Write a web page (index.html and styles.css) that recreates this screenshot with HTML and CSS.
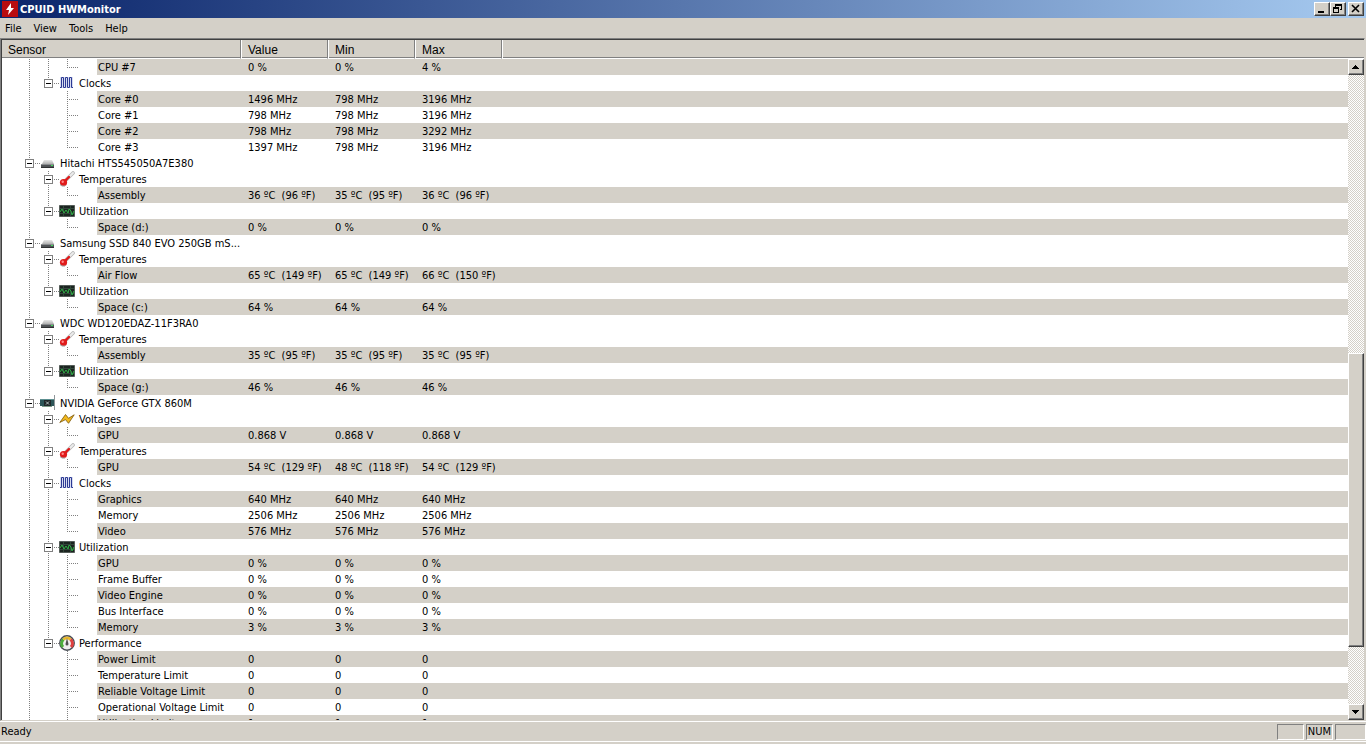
FILE: index.html
```html
<!DOCTYPE html>
<html lang="en">
<head>
    <meta charset="UTF-8">
    <title>CPUID HWMonitor</title>
    <link rel="stylesheet" href="styles.css">
</head>
<body>
    <svg class="defs" aria-hidden="true">
        <defs>
            <linearGradient id="metal" x1="0" y1="0" x2="0" y2="1">
                <stop offset="0" stop-color="#e8e8e8"/>
                <stop offset="1" stop-color="#b0b0b0"/>
            </linearGradient>
        </defs>
        <symbol id="clock" viewBox="0 0 16 16">
            <path fill="#d8dcf0" d="M1 2h13v11H1z"/>
            <path fill="none" stroke="#2c3a94" d="M1 12.500h1.500v-10h2v10h2v-10h2v10h2v-10h2v10H14"/>
        </symbol>
        <symbol id="disk" viewBox="0 0 16 16">
            <path fill="url(#metal)" d="M4 5h8l2 4H2z"/>
            <path fill="#505356" d="M1 9h13v3H1z"/>
            <path fill="#8a8d90" d="M1 9h13v1H1z"/>
            <path fill="#2e3032" d="M1 12h13v1H1z"/>
            <path fill="#3ee05a" d="M11 10h2v1h-2z"/>
        </symbol>
        <symbol id="temp" viewBox="0 0 16 16">
            <path stroke="#b4b4b4" stroke-width="3.600" stroke-linecap="round" d="M7 9l7-7"/>
            <path stroke="#ececec" stroke-width="2" stroke-linecap="round" d="M8 8l6-6"/>
            <path stroke="#e01818" stroke-width="2.400" stroke-linecap="round" d="M5 11l5-5"/>
            <circle cx="4.500" cy="11.500" r="3.600" fill="#e01c1c"/>
            <circle cx="3.700" cy="10.800" r="1.200" fill="#ff8a8a"/>
            <path fill="none" stroke="#9a9a9a" d="M1 13.500l2 1.500h3"/>
        </symbol>
        <symbol id="util" viewBox="0 0 16 16">
            <path fill="#1b2420" stroke="#555d59" d="M.5 2.500h15v11H.5z"/>
            <path stroke="#31463a" d="M1 5.500h14M1 10.500h14M4.500 3v10M11.500 3v10"/>
            <path fill="none" stroke="#2fae45" d="M1 9l2-3 2 4 2-3 2 3 1-4 2 2 1 4 2-4"/>
        </symbol>
        <symbol id="card" viewBox="0 0 16 16">
            <path fill="#2c5558" d="M0 4h14v7H0z"/>
            <path fill="#5c8f90" d="M0 4h14v1H0z"/>
            <path fill="#20282a" d="M4 5h7v6H4z"/>
            <path stroke="#b8c4c4" d="M6 6.500l3 3M9 6.500l-3 3"/>
            <path fill="#7d9a88" d="M2 11h10v1H2z"/>
            <path stroke="#8f9699" d="M14.500 0v15"/>
        </symbol>
        <symbol id="volt" viewBox="0 0 16 16">
            <path fill="#f2b91e" stroke="#7a5608" stroke-width=".8" d="M.8 11.500L6.500 3.500l3 3.800 5.700-3.500-5.700 8.500-3-3.700z"/>
        </symbol>
        <symbol id="gauge" viewBox="0 0 16 16">
            <circle cx="8" cy="8" r="7.200" fill="#eee" stroke="#474c54" stroke-width="1.500"/>
            <path fill="none" stroke="#4cae3c" stroke-width="3" d="M4 12A5 5 0 0 1 4.500 4.500"/>
            <path fill="none" stroke="#e8b830" stroke-width="3" d="M4.500 4.500A5 5 0 0 1 11.500 4.500"/>
            <path fill="none" stroke="#e04040" stroke-width="3" d="M11.500 4.500A5 5 0 0 1 12 12"/>
            <path fill="#505050" d="M8 3l1.500 6a1.500 1.500 0 0 1-3 0z"/>
        </symbol>
    </svg>

    <header class="titlebar">
        <svg class="logo" viewBox="0 0 16 16" aria-hidden="true">
            <path fill="#b80c10" d="M0 0h16v16H0z"/>
            <path fill="#fff" d="M9 2L4 9h3l-1 5 6-7H9z"/>
        </svg>
        <h1>CPUID HWMonitor</h1>
        <div class="window-buttons">
            <button type="button" aria-label="Minimize"><svg viewBox="0 0 12 10"><path fill="#000" d="M2 7h6v2H2z"/></svg></button>
            <button type="button" aria-label="Restore"><svg viewBox="0 0 12 10"><path fill="#000" d="M3 0h7v6H8V5h1V2H4v1H3zM1 3h6v6H1zM2 5v3h4V5z" fill-rule="evenodd"/></svg></button>
            <button type="button" class="close" aria-label="Close"><svg viewBox="0 0 12 10"><path stroke="#000" stroke-width="1.600" d="M2 1l7 7M9 1L2 8"/></svg></button>
        </div>
    </header>

    <nav class="menu">
        <button type="button">File</button>
        <button type="button">View</button>
        <button type="button">Tools</button>
        <button type="button">Help</button>
    </nav>

    <main class="list">
        <div class="view">
            <table>
                <colgroup>
                    <col class="col-sensor">
                    <col class="col-value">
                    <col class="col-value">
                    <col class="col-value">
                    <col>
                </colgroup>
                <thead>
                    <tr><th>Sensor</th><th>Value</th><th>Min</th><th>Max</th><td></td></tr>
                </thead>
                <tbody class="scrolled">
                    <tr class="leaf last"><td><span>CPU #7</span></td><td>0 %</td><td>0 %</td><td>4 %</td><td></td></tr>
                </tbody>
                <tbody class="last-group">
                    <tr class="group"><td><div><button type="button" aria-label="Collapse"></button><svg><use href="#clock"/></svg><span>Clocks</span></div></td><td></td><td></td><td></td><td></td></tr>
                    <tr class="leaf"><td><span>Core #0</span></td><td>1496 MHz</td><td>798 MHz</td><td>3196 MHz</td><td></td></tr>
                    <tr class="leaf"><td><span>Core #1</span></td><td>798 MHz</td><td>798 MHz</td><td>3196 MHz</td><td></td></tr>
                    <tr class="leaf"><td><span>Core #2</span></td><td>798 MHz</td><td>798 MHz</td><td>3292 MHz</td><td></td></tr>
                    <tr class="leaf last"><td><span>Core #3</span></td><td>1397 MHz</td><td>798 MHz</td><td>3196 MHz</td><td></td></tr>
                </tbody>

                <tbody>
                    <tr class="device"><td><div><button type="button" aria-label="Collapse"></button><svg><use href="#disk"/></svg><span>Hitachi HTS545050A7E380</span></div></td><td></td><td></td><td></td><td></td></tr>
                </tbody>
                <tbody>
                    <tr class="group"><td><div><button type="button" aria-label="Collapse"></button><svg><use href="#temp"/></svg><span>Temperatures</span></div></td><td></td><td></td><td></td><td></td></tr>
                    <tr class="leaf last"><td><span>Assembly</span></td><td>36 ºC&nbsp; (96 ºF)</td><td>35 ºC&nbsp; (95 ºF)</td><td>36 ºC&nbsp; (96 ºF)</td><td></td></tr>
                </tbody>
                <tbody class="last-group">
                    <tr class="group"><td><div><button type="button" aria-label="Collapse"></button><svg><use href="#util"/></svg><span>Utilization</span></div></td><td></td><td></td><td></td><td></td></tr>
                    <tr class="leaf last"><td><span>Space (d:)</span></td><td>0 %</td><td>0 %</td><td>0 %</td><td></td></tr>
                </tbody>

                <tbody>
                    <tr class="device"><td><div><button type="button" aria-label="Collapse"></button><svg><use href="#disk"/></svg><span>Samsung SSD 840 EVO 250GB mS...</span></div></td><td></td><td></td><td></td><td></td></tr>
                </tbody>
                <tbody>
                    <tr class="group"><td><div><button type="button" aria-label="Collapse"></button><svg><use href="#temp"/></svg><span>Temperatures</span></div></td><td></td><td></td><td></td><td></td></tr>
                    <tr class="leaf last"><td><span>Air Flow</span></td><td>65 ºC&nbsp; (149 ºF)</td><td>65 ºC&nbsp; (149 ºF)</td><td>66 ºC&nbsp; (150 ºF)</td><td></td></tr>
                </tbody>
                <tbody class="last-group">
                    <tr class="group"><td><div><button type="button" aria-label="Collapse"></button><svg><use href="#util"/></svg><span>Utilization</span></div></td><td></td><td></td><td></td><td></td></tr>
                    <tr class="leaf last"><td><span>Space (c:)</span></td><td>64 %</td><td>64 %</td><td>64 %</td><td></td></tr>
                </tbody>

                <tbody>
                    <tr class="device"><td><div><button type="button" aria-label="Collapse"></button><svg><use href="#disk"/></svg><span>WDC WD120EDAZ-11F3RA0</span></div></td><td></td><td></td><td></td><td></td></tr>
                </tbody>
                <tbody>
                    <tr class="group"><td><div><button type="button" aria-label="Collapse"></button><svg><use href="#temp"/></svg><span>Temperatures</span></div></td><td></td><td></td><td></td><td></td></tr>
                    <tr class="leaf last"><td><span>Assembly</span></td><td>35 ºC&nbsp; (95 ºF)</td><td>35 ºC&nbsp; (95 ºF)</td><td>35 ºC&nbsp; (95 ºF)</td><td></td></tr>
                </tbody>
                <tbody class="last-group">
                    <tr class="group"><td><div><button type="button" aria-label="Collapse"></button><svg><use href="#util"/></svg><span>Utilization</span></div></td><td></td><td></td><td></td><td></td></tr>
                    <tr class="leaf last"><td><span>Space (g:)</span></td><td>46 %</td><td>46 %</td><td>46 %</td><td></td></tr>
                </tbody>

                <tbody>
                    <tr class="device"><td><div><button type="button" aria-label="Collapse"></button><svg><use href="#card"/></svg><span>NVIDIA GeForce GTX 860M</span></div></td><td></td><td></td><td></td><td></td></tr>
                </tbody>
                <tbody>
                    <tr class="group"><td><div><button type="button" aria-label="Collapse"></button><svg><use href="#volt"/></svg><span>Voltages</span></div></td><td></td><td></td><td></td><td></td></tr>
                    <tr class="leaf last"><td><span>GPU</span></td><td>0.868 V</td><td>0.868 V</td><td>0.868 V</td><td></td></tr>
                </tbody>
                <tbody>
                    <tr class="group"><td><div><button type="button" aria-label="Collapse"></button><svg><use href="#temp"/></svg><span>Temperatures</span></div></td><td></td><td></td><td></td><td></td></tr>
                    <tr class="leaf last"><td><span>GPU</span></td><td>54 ºC&nbsp; (129 ºF)</td><td>48 ºC&nbsp; (118 ºF)</td><td>54 ºC&nbsp; (129 ºF)</td><td></td></tr>
                </tbody>
                <tbody>
                    <tr class="group"><td><div><button type="button" aria-label="Collapse"></button><svg><use href="#clock"/></svg><span>Clocks</span></div></td><td></td><td></td><td></td><td></td></tr>
                    <tr class="leaf"><td><span>Graphics</span></td><td>640 MHz</td><td>640 MHz</td><td>640 MHz</td><td></td></tr>
                    <tr class="leaf"><td><span>Memory</span></td><td>2506 MHz</td><td>2506 MHz</td><td>2506 MHz</td><td></td></tr>
                    <tr class="leaf last"><td><span>Video</span></td><td>576 MHz</td><td>576 MHz</td><td>576 MHz</td><td></td></tr>
                </tbody>
                <tbody>
                    <tr class="group"><td><div><button type="button" aria-label="Collapse"></button><svg><use href="#util"/></svg><span>Utilization</span></div></td><td></td><td></td><td></td><td></td></tr>
                    <tr class="leaf"><td><span>GPU</span></td><td>0 %</td><td>0 %</td><td>0 %</td><td></td></tr>
                    <tr class="leaf"><td><span>Frame Buffer</span></td><td>0 %</td><td>0 %</td><td>0 %</td><td></td></tr>
                    <tr class="leaf"><td><span>Video Engine</span></td><td>0 %</td><td>0 %</td><td>0 %</td><td></td></tr>
                    <tr class="leaf"><td><span>Bus Interface</span></td><td>0 %</td><td>0 %</td><td>0 %</td><td></td></tr>
                    <tr class="leaf last"><td><span>Memory</span></td><td>3 %</td><td>3 %</td><td>3 %</td><td></td></tr>
                </tbody>
                <tbody class="last-group">
                    <tr class="group"><td><div><button type="button" aria-label="Collapse"></button><svg><use href="#gauge"/></svg><span>Performance</span></div></td><td></td><td></td><td></td><td></td></tr>
                    <tr class="leaf"><td><span>Power Limit</span></td><td>0</td><td>0</td><td>0</td><td></td></tr>
                    <tr class="leaf"><td><span>Temperature Limit</span></td><td>0</td><td>0</td><td>0</td><td></td></tr>
                    <tr class="leaf"><td><span>Reliable Voltage Limit</span></td><td>0</td><td>0</td><td>0</td><td></td></tr>
                    <tr class="leaf"><td><span>Operational Voltage Limit</span></td><td>0</td><td>0</td><td>0</td><td></td></tr>
                    <tr class="leaf"><td><span>Utilization Limit</span></td><td>1</td><td>1</td><td>1</td><td></td></tr>
                </tbody>
            </table>
        </div>
        <div class="scroll">
            <div class="scroll-head"></div>
            <button type="button" aria-label="Scroll up"><svg viewBox="0 0 8 8"><path fill="#000" d="M3 2h1v1h1v1h1v1h1v1H0V5h1V4h1V3h1z"/></svg></button>
            <div class="track">
                <div class="thumb"></div>
            </div>
            <button type="button" aria-label="Scroll down"><svg viewBox="0 0 8 8"><path fill="#000" d="M0 2h7v1H6v1H5v1H4v1H3V5H2V4H1V3H0z"/></svg></button>
        </div>
    </main>

    <footer class="status">
        <p>Ready</p>
        <span class="pane"></span>
        <span class="pane">NUM</span>
        <span class="pane"></span>
    </footer>
</body>
</html>
```
FILE: styles.css
```css
* { box-sizing: border-box; }
body {
    font-family: "DejaVu Sans Condensed", "DejaVu Sans", sans-serif;
    font-size: 11px;
    line-height: 16px;
    color: #000;
    margin: 0;
    height: 100vh;
    display: flex;
    flex-direction: column;
    overflow: hidden;
    background-color: #d4d0c8;
}
button {
    font: inherit;
    color: inherit;
    padding: 0;
    border: none;
    background-color: #d4d0c8;
}
.defs {
    position: absolute;
    width: 0;
    height: 0;
}

/* title bar */
.titlebar {
    display: flex;
    align-items: center;
    height: 18px;
    padding: 0 2px;
    background: linear-gradient(to right, #0a246a, #a6caf0);
}
.logo {
    width: 16px;
    height: 16px;
}
.titlebar h1 {
    flex: 1;
    margin: 0 0 0 2px;
    padding-top: 2px;
    font-size: 11px;
    font-weight: bold;
    color: #fff;
}
.window-buttons {
    display: flex;
}
.window-buttons button {
    width: 16px;
    height: 14px;
}
.window-buttons svg {
    display: block;
    width: 12px;
    height: 10px;
    margin: 0 auto;
}
.window-buttons .close {
    margin-left: 2px;
}
.window-buttons button, .scroll button, .thumb {
    border: 1px solid;
    border-color: #fff #404040 #404040 #fff;
    box-shadow: inset -1px -1px #808080;
}

/* menu */
.menu {
    display: flex;
    gap: 12px;
    height: 20px;
    padding: 3px 5px 1px;
}

/* sensor list */
.list {
    flex: 1;
    min-height: 0;
    display: flex;
    margin-right: 1px;
    border-top: 1px solid #808080;
    border-left: 1px solid #808080;
    border-right: 1px solid #d4d0c8;
    border-bottom: 1px solid #d4d0c8;
}
.view {
    flex: 1;
    overflow: hidden;
    border-top: 1px solid #404040;
    border-left: 1px solid #404040;
    background-color: #fff;
}
table {
    width: 100%;
    table-layout: fixed;
    border-spacing: 0;
}
.col-sensor { width: 239px; }
.col-value { width: 87px; }
thead th, thead td {
    height: 19px;
    padding: 1px 6px 0;
    font-family: "Liberation Sans", Arial, sans-serif;
    font-size: 12px;
    font-weight: normal;
    line-height: 16px;
    text-align: left;
    background-color: #d4d0c8;
    border-bottom: 1px solid #fff;
    box-shadow: inset 0 -1px #808080;
}
thead th {
    border-right: 1px solid #808080;
}
thead th + th, thead td {
    border-left: 1px solid #fff;
}
tbody td {
    height: 16px;
    padding: 0 0 0 7px;
    line-height: 14px;
    white-space: nowrap;
}
tbody td + td {
    padding-top: 2px;
}

/* tree lines: --l2 and --l3 are the heights of the inner vertical lines */
tbody tr {
    --l2: 16px;
    --l3: 0px;
    --down: repeating-linear-gradient(to bottom, #808080 0 1px, transparent 1px 2px);
    --across: repeating-linear-gradient(to right, #808080 0 1px, transparent 1px 2px);
}
tbody td:first-child {
    padding-left: var(--indent);
    background-image: var(--down), var(--down), var(--down), var(--across);
    background-position: 27px 0, 46px 0, 65px 0, var(--stub) 8px;
    background-size: 1px 100%, 1px var(--l2), 1px var(--l3), 11px 1px;
    background-repeat: no-repeat;
}
.device { --l2: 0px; --indent: 23px; --stub: 27px; }
.group { --indent: 42px; --stub: 46px; }
.leaf { --l3: 16px; --indent: 95px; --stub: 65px; }
.leaf.last { --l3: 9px; }
.last-group .group { --l2: 8px; }
.last-group .leaf { --l2: 0px; }

td div {
    display: flex;
    align-items: center;
    height: 16px;
}
td div svg {
    width: 16px;
    height: 16px;
    margin: 0 4px 0 6px;
}
td button {
    width: 9px;
    height: 9px;
    border: 1px solid #808080;
    background: linear-gradient(#000, #000) center / 5px 1px no-repeat #fff;
}
td span {
    padding-top: 2px;
}
.leaf span {
    display: block;
    padding-left: 1px;
}
.leaf:nth-child(even) td + td, .leaf:nth-child(even) span,
.scrolled td + td, .scrolled span {
    background-color: #d4d0c8;
}

/* scroll bar */
.scroll {
    width: 16px;
    display: flex;
    flex-direction: column;
}
.scroll-head {
    height: 20px;
    border-top: 1px solid #404040;
    border-bottom: 1px solid #fff;
    box-shadow: inset 0 -1px #808080;
}
.scroll button {
    height: 16px;
}
.scroll svg {
    display: block;
    width: 8px;
    height: 8px;
    margin: 0 auto;
}
.track {
    flex: 1;
    display: flex;
    flex-direction: column;
    background: repeating-conic-gradient(#d4d0c8 0 25%, #fff 0 50%) 0 0 / 2px 2px;
}
.track::before {
    content: "";
    flex: 279;
}
.track::after {
    content: "";
    flex: 57;
}
.thumb {
    flex: 293;
    background-color: #d4d0c8;
}

/* status bar */
.status {
    display: flex;
    gap: 2px;
    height: 23px;
    padding: 2px 0 4px 1px;
    border-top: 1px solid #fff;
    box-shadow: inset 0 -2px #d4d0c8, inset 0 -3px #fff;
}
.status p {
    flex: 1;
    margin: 0;
}
.pane {
    min-width: 27px;
    height: 16px;
    padding: 0 1px;
    line-height: 14px;
    border: 1px solid;
    border-color: #808080 #fff #fff #808080;
}
.pane:last-child {
    min-width: 31px;
}
```
